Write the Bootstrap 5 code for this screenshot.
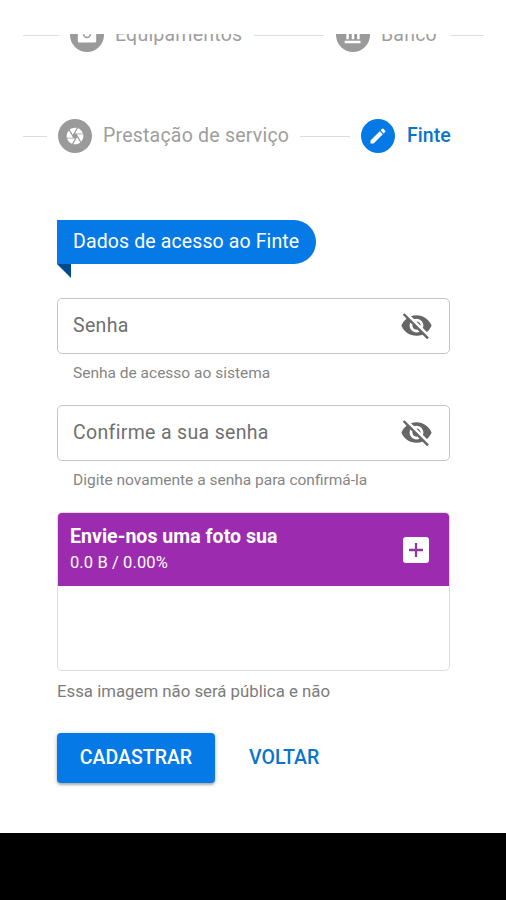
<!DOCTYPE html>
<html lang="pt-BR">
<head>
<meta charset="utf-8">
<meta name="viewport" content="width=device-width, initial-scale=1">
<title>Finte</title>
<link href="https://cdn.jsdelivr.net/npm/bootstrap@5.3.0/dist/css/bootstrap.min.css" rel="stylesheet">
<style>
body{font-family:Roboto,"Liberation Sans",sans-serif;background:#fff;height:900px;overflow:hidden}
.screen{height:833px;padding-top:34px}
.steps{margin:0 21px 0 23px;height:186px;color:#9e9e9e;font-size:19.5px;line-height:34px;letter-spacing:.22px}
.step-row{height:34px}
.step-row.first{margin-top:-16px;margin-bottom:67px}
.dot{width:34px;height:34px;background:#9a9a9a;color:#fff;flex:none;margin:0 11px}
.dot svg{width:20px;height:20px;fill:currentColor}
.dot.on{background:#0579e6}
.rule{height:1px;background:#dcdcdc;flex:none}
.rule-a{width:36px}.rule-b{width:70px}.rule-c{width:33px}.rule-d{width:24px}.rule-e{width:50px}
.w-equip{width:139px}.w-banco{width:70px}.w-serv{width:197px}
.blue{color:#0a74cd;letter-spacing:.05px;font-weight:500;padding-left:1px}
.form-area{width:393px;margin-left:57px}
.ribbon{width:259px;height:44px;line-height:44px;padding-left:16px;background:#0579e6;color:#fff;font-size:19.5px;letter-spacing:.12px;border-radius:0 22px 22px 0}
.fold{width:14px;height:14px;margin-bottom:20px;background:#034a8d;clip-path:polygon(0 0,100% 0,100% 100%)}
.field{height:56px;border:1.5px solid #c4c4c4;border-radius:5px;padding:0 16px 0 15px;font-size:19.5px;letter-spacing:.33px;color:#707070}
.field svg{width:33px;height:33px;margin-top:-2px;fill:#666}
.hint{height:51px;padding:9px 0 0 16px;font-size:15.5px;line-height:20px;color:#858585}
.uploader{height:159px;border:1px solid #dcdcdc;border-radius:5px}
.up-head{height:73px;background:#9c2bb0;color:#fff;padding:0 20px 0 12px}
.up-title{font-size:19.5px;line-height:26px;font-weight:700;letter-spacing:.04px}
.up-sub{font-size:16.5px;line-height:26px;letter-spacing:.1px}
.plus{width:26px;height:26px;border-radius:3px;background:#fff}
.note{font-size:16.8px;line-height:20px;height:19px;margin:10px 0 33px;color:#7c7c7c}
.btn-main,.btn-flat{height:50px;font-size:19.5px;font-weight:500;padding:0;border:0;line-height:50px}
.btn-main{width:158px;background:#0579e6;color:#fff;border-radius:4px;box-shadow:0 1px 5px rgba(0,0,0,.22),0 2px 2px rgba(0,0,0,.2)}
.btn-flat{margin-left:34px;color:#0a74cd}
.sysbar{height:67px;background:#000}
</style>
</head>
<body>
<main class="screen">
  <nav class="steps overflow-hidden">
    <div class="step-row first d-flex align-items-center text-nowrap">
      <span class="rule rule-a"></span>
      <span class="dot rounded-circle d-flex align-items-center justify-content-center"><svg viewBox="0 0 24 24"><path d="M20.500 6H17A5 5 0 0 0 7 6H3.500C2 6 1 7 1 8v11.500c0 1 .9 1.500 2 1.500h18c1.100 0 2-.5 2-1.500V8c0-1-1-2-2.500-2zM12 3a3 3 0 0 1 3 3H9a3 3 0 0 1 3-3zm0 13a5 5 0 0 1-5-5h2a3 3 0 0 0 6 0h2a5 5 0 0 1-5 5z"/></svg></span>
      <span class="w-equip">Equipamentos</span>
      <span class="rule rule-b me-1"></span>
      <span class="dot rounded-circle d-flex align-items-center justify-content-center ms-2"><svg viewBox="0 0 24 24"><path d="M4 10v7h3v-7H4zm6.500 0v7h3v-7h-3zM2 22h19v-3H2v3zm15-12v7h3v-7h-3zM11.500 1 2 6v2h19V6l-9.500-5z"/></svg></span>
      <span class="w-banco">Banco</span>
      <span class="rule rule-c"></span>
    </div>
    <div class="step-row d-flex align-items-center text-nowrap">
      <span class="rule rule-d"></span>
      <span class="dot rounded-circle d-flex align-items-center justify-content-center"><svg viewBox="0 0 24 24"><path d="M9.400 10.500l4.770-8.260C13.470 2.090 12.750 2 12 2c-2.400 0-4.600.85-6.320 2.250l3.660 6.350.060-.1zM21.540 9c-.92-2.920-3.150-5.260-6-6.340L11.880 9h9.660zm.26 1h-7.490l.29.5 4.760 8.250C21 16.970 22 14.610 22 12c0-.69-.07-1.350-.2-2zM8.540 12l-3.900-6.750C3.010 7.030 2 9.390 2 12c0 .69.07 1.350.2 2h7.490l-1.150-2zm-6.080 3c.92 2.920 3.150 5.260 6 6.340L12.120 15H2.460zm11.270 0-3.900 6.760c.7.150 1.420.24 2.170.24 2.400 0 4.600-.85 6.320-2.250l-3.660-6.350-.93 1.600z"/></svg></span>
      <span class="w-serv">Prestação de serviço</span>
      <span class="rule rule-e"></span>
      <span class="dot on rounded-circle d-flex align-items-center justify-content-center"><svg viewBox="0 0 24 24"><path d="M3 17.250V21h3.750L17.810 9.940l-3.750-3.750L3 17.250zM20.710 7.040a1 1 0 0 0 0-1.410l-2.340-2.340a1 1 0 0 0-1.410 0l-1.830 1.830 3.750 3.750 1.830-1.830z"/></svg></span>
      <span class="blue">Finte</span>
    </div>
  </nav>
  <section class="form-area">
    <div class="ribbon text-nowrap">Dados de acesso ao Finte</div>
    <div class="fold"></div>
    <div class="field d-flex align-items-center justify-content-between"><span>Senha</span><svg viewBox="0 0 24 24"><use href="#eye-off"/></svg></div>
    <div class="hint">Senha de acesso ao sistema</div>
    <div class="field d-flex align-items-center justify-content-between"><span>Confirme a sua senha</span><svg viewBox="0 0 24 24"><path id="eye-off" d="M12 7c2.760 0 5 2.240 5 5 0 .65-.13 1.260-.36 1.830l2.920 2.920c1.510-1.260 2.700-2.890 3.430-4.750-1.730-4.390-6-7.500-11-7.500-1.400 0-2.740.25-3.980.7l2.160 2.160C10.740 7.130 11.350 7 12 7zM2 4.270l2.280 2.280.46.46C3.080 8.300 1.780 10.020 1 12c1.730 4.390 6 7.500 11 7.500 1.550 0 3.030-.3 4.380-.84l.42.42L19.730 22 21 20.730 3.270 3 2 4.270zM7.530 9.800l1.550 1.550c-.05.21-.08.43-.08.65 0 1.660 1.340 3 3 3 .22 0 .44-.03.65-.08l1.550 1.550c-.67.33-1.410.53-2.200.53-2.760 0-5-2.240-5-5 0-.79.2-1.530.53-2.200zm4.310-.78 3.150 3.150.02-.16c0-1.660-1.340-3-3-3l-.17.01z"/></svg></div>
    <div class="hint">Digite novamente a senha para confirmá-la</div>
    <div class="uploader overflow-hidden">
      <div class="up-head d-flex align-items-center justify-content-between">
        <div><div class="up-title">Envie-nos uma foto sua</div><div class="up-sub">0.0 B / 0.00%</div></div>
        <div class="plus d-flex align-items-center justify-content-center"><svg width="16" height="16" viewBox="0 0 16 16"><path d="M8 1v14M1 8h14" stroke="#8c3a9c" stroke-width="2.300"/></svg></div>
      </div>
    </div>
    <div class="note overflow-hidden text-nowrap">Essa imagem não será pública e não</div>
    <div class="d-flex">
      <button class="btn btn-main">CADASTRAR</button>
      <button class="btn btn-flat">VOLTAR</button>
    </div>
  </section>
</main>
<footer class="sysbar"></footer>
<script src="https://cdn.jsdelivr.net/npm/bootstrap@5.3.0/dist/js/bootstrap.bundle.min.js"></script>
</body>
</html>
